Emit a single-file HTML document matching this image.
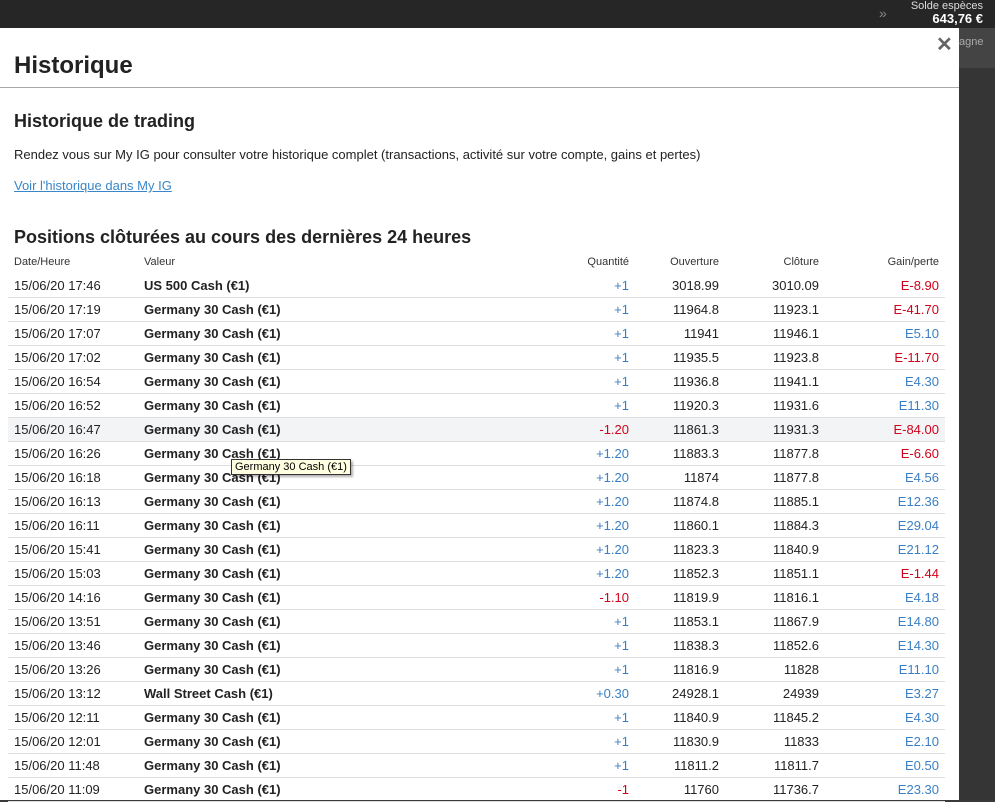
<!DOCTYPE html>
<html><head><meta charset="utf-8"><style>
body{margin:0;width:995px;height:800px;overflow:hidden;background:#3a3a3a;font-family:"Liberation Sans",sans-serif;position:relative}
.top{position:absolute;left:0;top:0;width:995px;height:28px;background:#262626}
.solde{position:absolute;right:12px;top:0;color:#ddd;font-size:11px;text-align:right;line-height:12px}
.solde b{color:#fff;font-size:13px;display:block;line-height:14px}
.chev{position:absolute;left:879px;top:5px;color:#888;font-size:14px}
.side{position:absolute;left:959px;top:28px;width:36px;height:772px;background:#353535}
.side2{position:absolute;left:959px;top:28px;width:36px;height:40px;background:#444;color:#aaa;font-size:11px;padding-top:8px;box-sizing:border-box}
.modal{position:absolute;left:0;top:28px;width:959px;height:772px;background:#fff;color:#222}
h1{position:absolute;left:14px;top:24px;margin:0;font-size:24px;font-weight:bold}
.hr{position:absolute;left:0;top:59px;width:959px;height:1px;background:#aaa}
.x{position:absolute;left:936px;top:4px;font-size:20px;color:#666;font-weight:bold}
h2{position:absolute;left:14px;top:83px;margin:0;font-size:18px;font-weight:bold}
.p{position:absolute;left:14px;top:119px;font-size:13px}
.a{position:absolute;left:14px;top:150px;font-size:13px;color:#3a86c8;text-decoration:underline}
h3{position:absolute;left:14px;top:199px;margin:0;font-size:18px;font-weight:bold}
table{position:absolute;left:8px;top:228px;width:937px;border-collapse:collapse;font-size:13px}
th{font-weight:normal;font-size:11px;color:#333;height:18px;text-align:right;padding:0 6px;vertical-align:top}
td{height:23px;border-bottom:1px solid #ddd;text-align:right;padding:0 6px}
td:nth-child(1),td:nth-child(2),th:nth-child(1),th:nth-child(2){text-align:left}
td:nth-child(2){font-weight:bold;color:#222}
.b{color:#3a7fc4}.r{color:#d0021b}
tr.h td{background:#f3f4f6}
.tip{position:absolute;left:231px;top:459px;background:#ffffe1;border:1px solid #333;font-size:11px;padding:1px 3px;box-shadow:2px 2px 2px rgba(0,0,0,.3)}
</style></head><body>
<div class="top"><span class="chev">»</span><div class="solde">Solde espèces<b>643,76 €</b></div></div>
<div class="side"></div><div class="side2">agne</div>
<div class="modal">
<h1>Historique</h1><div class="x">✕</div><div class="hr"></div>
<h2>Historique de trading</h2>
<div class="p">Rendez vous sur My IG pour consulter votre historique complet (transactions, activité sur votre compte, gains et pertes)</div>
<div class="a">Voir l'historique dans My IG</div>
<h3>Positions clôturées au cours des dernières 24 heures</h3>
<table>
<tr><th style="width:118px">Date/Heure</th><th>Valeur</th><th>Quantité</th><th style="width:78px">Ouverture</th><th style="width:88px">Clôture</th><th style="width:108px">Gain/perte</th></tr>
<tr><td>15/06/20 17:46</td><td>US 500 Cash (€1)</td><td class="b">+1</td><td>3018.99</td><td>3010.09</td><td class="r">E-8.90</td></tr>
<tr><td>15/06/20 17:19</td><td>Germany 30 Cash (€1)</td><td class="b">+1</td><td>11964.8</td><td>11923.1</td><td class="r">E-41.70</td></tr>
<tr><td>15/06/20 17:07</td><td>Germany 30 Cash (€1)</td><td class="b">+1</td><td>11941</td><td>11946.1</td><td class="b">E5.10</td></tr>
<tr><td>15/06/20 17:02</td><td>Germany 30 Cash (€1)</td><td class="b">+1</td><td>11935.5</td><td>11923.8</td><td class="r">E-11.70</td></tr>
<tr><td>15/06/20 16:54</td><td>Germany 30 Cash (€1)</td><td class="b">+1</td><td>11936.8</td><td>11941.1</td><td class="b">E4.30</td></tr>
<tr><td>15/06/20 16:52</td><td>Germany 30 Cash (€1)</td><td class="b">+1</td><td>11920.3</td><td>11931.6</td><td class="b">E11.30</td></tr>
<tr class="h"><td>15/06/20 16:47</td><td>Germany 30 Cash (€1)</td><td class="r">-1.20</td><td>11861.3</td><td>11931.3</td><td class="r">E-84.00</td></tr>
<tr><td>15/06/20 16:26</td><td>Germany 30 Cash (€1)</td><td class="b">+1.20</td><td>11883.3</td><td>11877.8</td><td class="r">E-6.60</td></tr>
<tr><td>15/06/20 16:18</td><td>Germany 30 Cash (€1)</td><td class="b">+1.20</td><td>11874</td><td>11877.8</td><td class="b">E4.56</td></tr>
<tr><td>15/06/20 16:13</td><td>Germany 30 Cash (€1)</td><td class="b">+1.20</td><td>11874.8</td><td>11885.1</td><td class="b">E12.36</td></tr>
<tr><td>15/06/20 16:11</td><td>Germany 30 Cash (€1)</td><td class="b">+1.20</td><td>11860.1</td><td>11884.3</td><td class="b">E29.04</td></tr>
<tr><td>15/06/20 15:41</td><td>Germany 30 Cash (€1)</td><td class="b">+1.20</td><td>11823.3</td><td>11840.9</td><td class="b">E21.12</td></tr>
<tr><td>15/06/20 15:03</td><td>Germany 30 Cash (€1)</td><td class="b">+1.20</td><td>11852.3</td><td>11851.1</td><td class="r">E-1.44</td></tr>
<tr><td>15/06/20 14:16</td><td>Germany 30 Cash (€1)</td><td class="r">-1.10</td><td>11819.9</td><td>11816.1</td><td class="b">E4.18</td></tr>
<tr><td>15/06/20 13:51</td><td>Germany 30 Cash (€1)</td><td class="b">+1</td><td>11853.1</td><td>11867.9</td><td class="b">E14.80</td></tr>
<tr><td>15/06/20 13:46</td><td>Germany 30 Cash (€1)</td><td class="b">+1</td><td>11838.3</td><td>11852.6</td><td class="b">E14.30</td></tr>
<tr><td>15/06/20 13:26</td><td>Germany 30 Cash (€1)</td><td class="b">+1</td><td>11816.9</td><td>11828</td><td class="b">E11.10</td></tr>
<tr><td>15/06/20 13:12</td><td>Wall Street Cash (€1)</td><td class="b">+0.30</td><td>24928.1</td><td>24939</td><td class="b">E3.27</td></tr>
<tr><td>15/06/20 12:11</td><td>Germany 30 Cash (€1)</td><td class="b">+1</td><td>11840.9</td><td>11845.2</td><td class="b">E4.30</td></tr>
<tr><td>15/06/20 12:01</td><td>Germany 30 Cash (€1)</td><td class="b">+1</td><td>11830.9</td><td>11833</td><td class="b">E2.10</td></tr>
<tr><td>15/06/20 11:48</td><td>Germany 30 Cash (€1)</td><td class="b">+1</td><td>11811.2</td><td>11811.7</td><td class="b">E0.50</td></tr>
<tr><td>15/06/20 11:09</td><td>Germany 30 Cash (€1)</td><td class="r">-1</td><td>11760</td><td>11736.7</td><td class="b">E23.30</td></tr>
</table>
</div>
<div class="tip">Germany 30 Cash (€1)</div>
</body></html>
